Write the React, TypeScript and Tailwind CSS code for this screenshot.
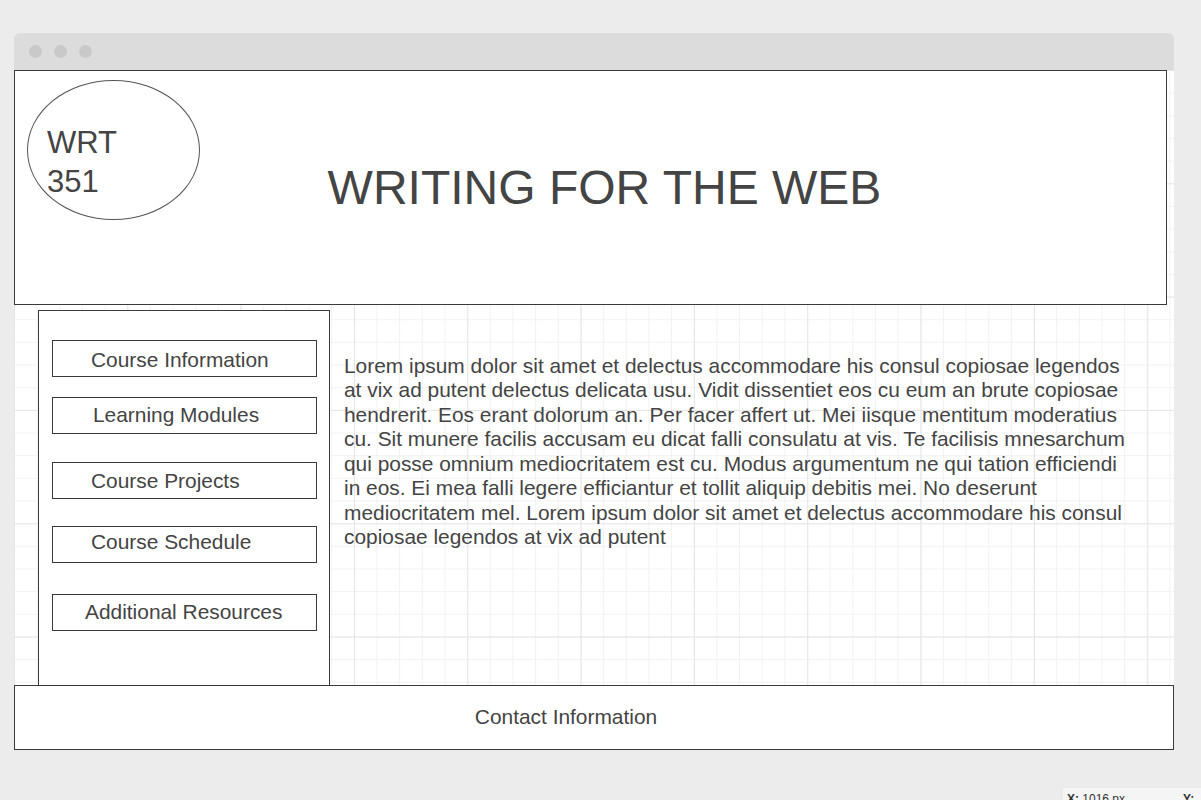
import React from "react";

const NAV = [
  { label: "Course Information", cls: "mt-[29px] pl-[38px] pt-[2px]" },
  { label: "Learning Modules", cls: "mt-[20px] pl-[40px] pb-[2px]" },
  { label: "Course Projects", cls: "mt-[28px] pl-[38px]" },
  { label: "Course Schedule", cls: "mt-[27px] pl-[38px] pb-[6px]" },
  { label: "Additional Resources", cls: "mt-[31px] pl-[32px] pb-[2px]" },
];

const LOREM =
  "Lorem ipsum dolor sit amet et delectus accommodare his consul copiosae legendos at vix ad putent delectus delicata usu. Vidit dissentiet eos cu eum an brute copiosae hendrerit. Eos erant dolorum an. Per facer affert ut. Mei iisque mentitum moderatius cu. Sit munere facilis accusam eu dicat falli consulatu at vis. Te facilisis mnesarchum qui posse omnium mediocritatem est cu. Modus argumentum ne qui tation efficiendi in eos. Ei mea falli legere efficiantur et tollit aliquip debitis mei. No deserunt mediocritatem mel. Lorem ipsum dolor sit amet et delectus accommodare his consul copiosae legendos at vix ad putent";

export default function App() {
  return (
    <div className="w-full h-[800px] overflow-hidden bg-[#ececec] pt-[33px] font-['Liberation_Sans',Arial,sans-serif] text-[#444]">
      {/* browser window */}
      <div className="ml-[14px] w-[1160px]">
        <div className="h-[37px] bg-[#dcdcdc] rounded-t-[6px] flex items-center gap-[12px] pl-[15px]">
          <span className="w-[13px] h-[13px] rounded-full bg-[#c9c9c9]" />
          <span className="w-[13px] h-[13px] rounded-full bg-[#c9c9c9]" />
          <span className="w-[13px] h-[13px] rounded-full bg-[#c9c9c9]" />
        </div>

        {/* canvas with grid */}
        <div className="bg-white [background-image:linear-gradient(to_right,#e6e6e6_1px,transparent_1px),linear-gradient(to_bottom,#e6e6e6_1px,transparent_1px),linear-gradient(to_right,#f2f2f2_1px,transparent_1px),linear-gradient(to_bottom,#f2f2f2_1px,transparent_1px)] [background-size:113.333px_113.333px,113.333px_113.333px,22.667px_22.667px,22.667px_22.667px]">
          {/* header */}
          <div className="w-[1153px] h-[235px] bg-white border border-[#3a3a3a] grid">
            <div className="[grid-area:1/1] self-start justify-self-start mt-[9px] ml-[12px] w-[173px] h-[140px] rounded-[50%] border border-[#555] pt-[42px] pl-[19px]">
              <div className="text-[31px] leading-[39px]">
                WRT
                <br />
                351
              </div>
            </div>
            <div className="[grid-area:1/1] self-center justify-self-center pl-[28px] text-[48px] leading-none">
              WRITING FOR THE WEB
            </div>
          </div>

          {/* body row */}
          <div className="flex items-start mt-[5px]">
            <div className="ml-[24px] w-[292px] h-[375px] bg-white border border-b-0 border-[#3a3a3a] flex flex-col pl-[13px]">
              {NAV.map((n) => (
                <div
                  key={n.label}
                  className={`${n.cls} w-[265px] h-[37px] shrink-0 border border-[#3a3a3a] bg-white flex items-center text-[20.9px] leading-[24px]`}
                >
                  {n.label}
                </div>
              ))}
            </div>
            <p className="ml-[14px] mt-[44px] w-[786px] text-[20.9px] leading-[24.48px]">{LOREM}</p>
          </div>

          {/* footer */}
          <div className="h-[65px] bg-white border border-[#3a3a3a] flex items-center justify-center pr-[56px] pb-[2px] text-[20.9px]">
            Contact Information
          </div>
        </div>
      </div>

      {/* coordinates panel */}
      <div className="flex justify-end mt-[38px]">
        <div className="w-[138px] h-[20px] bg-[#f5f5f5] flex gap-[8px] pl-[4px] pt-[4px] text-[12px] leading-[14px] text-[#333] whitespace-nowrap">
          <span>
            <b>X:</b> 1016 px
          </span>
          <span className="ml-[50px]">
            <b>Y:</b>
          </span>
        </div>
      </div>
    </div>
  );
}
